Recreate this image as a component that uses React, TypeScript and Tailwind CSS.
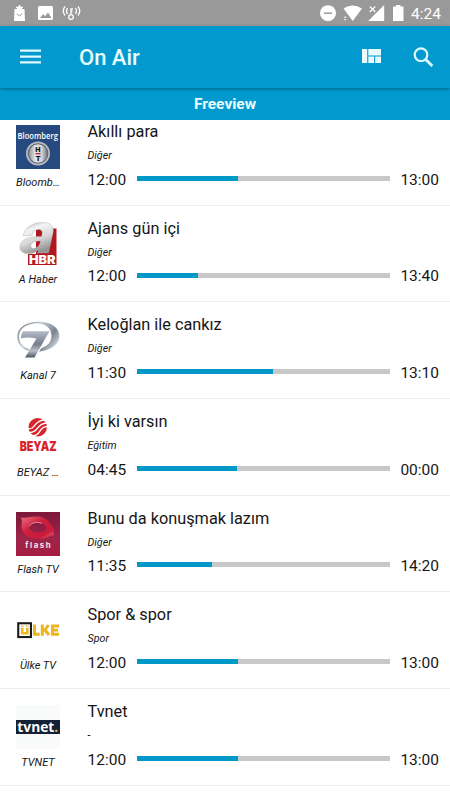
import React from 'react';

type Program = {
  channel: string;
  title: string;
  category: string;
  start: string;
  end: string;
  progress: number;
  logo: React.ReactNode;
};

function BloombergLogo() {
  return (
    <svg viewBox="0 0 44 44" className="size-11 overflow-visible">
      <defs>
        <linearGradient id="ht-ring" x1="0" y1="0" x2="1" y2="0">
          <stop offset="0" stopColor="#8b8d93" />
          <stop offset="0.35" stopColor="#e6e6e8" />
          <stop offset="0.7" stopColor="#d2d3d6" />
          <stop offset="1" stopColor="#77797f" />
        </linearGradient>
      </defs>
      <rect width="44" height="44" fill="#264a80" />
      <circle cx="22" cy="28.5" r="12" fill="#b9bcc3" />
      <circle cx="22" cy="28.5" r="10.3" fill="#5c6069" />
      <circle cx="22" cy="28.5" r="9.3" fill="url(#ht-ring)" />
      <rect x="19.5" y="28" width="5" height="1.3" fill="#c0203a" />
      <text x="22" y="27.2" textAnchor="middle" fontSize="7.5" fontWeight="900" fill="#111" fontFamily="Roboto, sans-serif">H</text>
      <text x="22" y="35.8" textAnchor="middle" fontSize="7.5" fontWeight="900" fill="#111" fontFamily="Roboto, sans-serif">T</text>
      <text x="1.5" y="14.1" textLength="40.5" lengthAdjust="spacingAndGlyphs" fontSize="8.2" fontWeight="600" fill="#fff" fontFamily="'Open Sans', sans-serif">Bloomberg</text>
    </svg>
  );
}

function HaberLogo() {
  return (
    <svg viewBox="0 0 44 44" className="size-11 overflow-visible">
      <defs>
        <linearGradient id="haber-a" x1="0" y1="0" x2="0.4" y2="1">
          <stop offset="0" stopColor="#a2a2a2" />
          <stop offset="0.3" stopColor="#f4f4f4" />
          <stop offset="0.65" stopColor="#d6d6d6" />
          <stop offset="1" stopColor="#959595" />
        </linearGradient>
      </defs>
      <path d="M12 32H20V6.5H40.5V43H12Z" fill="#b0181e" />
      <path
        fill="url(#haber-a)"
        stroke="#aaa"
        strokeWidth="0.4"
        fillRule="evenodd"
        d="M7 14C9 5 17 0.5 26 0.5C35 0.5 38.5 4 37 11L32.5 31H21.5L22.5 27.5C19 31 15 32 11 31.5C5 31 2.5 27 4.5 22C7 16 15 14.5 25.5 14.5C27 10 26 7.5 22.5 7.5C19 7.5 17 9.5 16 13.5ZM24.5 19C18.5 19 15.5 20.5 15 23.5C14.5 26 17 27 19.5 26C22.5 25 24 22.5 24.5 19Z"
      />
      <text x="13" y="41.7" textLength="26.5" lengthAdjust="spacingAndGlyphs" fontSize="11.8" fontWeight="900" fill="#fff" fontFamily="Inter, sans-serif">HBR</text>
    </svg>
  );
}

function Kanal7Logo() {
  return (
    <svg viewBox="0 0 44 44" className="size-11 overflow-visible">
      <defs>
        <linearGradient id="kanal-ring" x1="0" y1="0" x2="1" y2="0.6">
          <stop offset="0" stopColor="#65717c" />
          <stop offset="0.45" stopColor="#c5cbd1" />
          <stop offset="0.8" stopColor="#7b858f" />
          <stop offset="1" stopColor="#c0c7cd" />
        </linearGradient>
        <linearGradient id="kanal-seven" x1="0" y1="0" x2="0" y2="1">
          <stop offset="0" stopColor="#b4bac6" />
          <stop offset="0.5" stopColor="#747e91" />
          <stop offset="0.75" stopColor="#b9bec8" />
          <stop offset="1" stopColor="#4d5665" />
        </linearGradient>
      </defs>
      <path
        fill="url(#kanal-ring)"
        fillRule="evenodd"
        d="M21 3.7C34 3 43.3 9 43.3 18C43.3 27 33 33.7 20 33.7C9 33.7 1.3 28 1.3 19C1.3 10 9 4.5 21 3.7ZM20 5.2C9 6.2 2.8 11 3 19C3.2 27 10 32 19 31.5C28 31 35.5 26 35.5 18C35.5 10 29 5 20 5.2Z"
      />
      <path fill="#fff" d="M6.5 12.5H34.5L19.5 40.5H8L18 23H4Z" />
      <path fill="url(#kanal-seven)" d="M7 13.2H33.5L18.5 39.4H9L20.5 20.5Q11 18.5 4.7 20.5Q5 16 7 13.2Z" />
    </svg>
  );
}

function BeyazLogo() {
  return (
    <svg viewBox="0 0 44 44" className="size-11 overflow-visible">
      <circle cx="21.7" cy="12.3" r="9.2" fill="#d8242b" />
      <g fill="none" stroke="#fff" strokeWidth="1.4">
        <path d="M12 13.5C20 15 17 6 28 5" />
        <path d="M13.5 17.5C23 18 20 8.5 30.5 8" />
        <path d="M17 21C26 20 22 11.5 32 11.5" />
      </g>
      <text x="3.7" y="36.2" textLength="37" lengthAdjust="spacingAndGlyphs" fontSize="13.6" fontWeight="900" fill="#d8242b" fontFamily="Inter, sans-serif">BEYAZ</text>
    </svg>
  );
}

function FlashLogo() {
  return (
    <svg viewBox="0 0 44 44" className="size-11 overflow-visible">
      <defs>
        <linearGradient id="flash-bg" x1="0" y1="0" x2="0" y2="1">
          <stop offset="0" stopColor="#7c1839" />
          <stop offset="0.6" stopColor="#9f2449" />
          <stop offset="1" stopColor="#a51c40" />
        </linearGradient>
        <linearGradient id="flash-eye" x1="0" y1="0" x2="1" y2="1">
          <stop offset="0" stopColor="#e87483" />
          <stop offset="0.4" stopColor="#d0203f" />
          <stop offset="0.75" stopColor="#c91a3c" />
          <stop offset="1" stopColor="#f3667b" />
        </linearGradient>
      </defs>
      <rect width="44" height="44" fill="url(#flash-bg)" />
      <path
        fill="url(#flash-eye)"
        fillRule="evenodd"
        d="M4.5 5.5C12 6.5 18 3.5 25 5C31 6.5 34 11 37 15.5C38 17 37.5 20 38 23.5C35 22 31 27 22 27C13 27 7 23 5.500 16C5 11 7.5 9 4.5 5.5ZM21 10.5C16 10.5 13 13 13.5 16.500C14.5 20 19 21 24.5 20.500C29 20 31 17.5 30 14.5C28.5 11.5 25 10.5 21 10.5Z"
      />
      <path d="M13.500 14C15.5 10.5 21 9.5 26 11.300" fill="none" stroke="#f4a5b0" strokeWidth="0.8" />
      <text x="9.3" y="35.5" textLength="25.2" fontSize="7.8" fontWeight="700" fill="#f7e6ea" fontFamily="Inter, sans-serif">flash</text>
    </svg>
  );
}

function UlkeLogo() {
  return (
    <svg viewBox="0 0 44 44" className="size-11 overflow-visible">
      <rect x="2.25" y="15.25" width="12.7" height="13.8" fill="#fff" stroke="#1b1b1b" strokeWidth="2.1" />
      <g fill="none" stroke="#edb51e" strokeWidth="3">
        <path d="M6.2 20V25.3H11.3V20" strokeWidth="2.6" />
        <path d="M5 18.2H7.5M10 18.2H12.5" strokeWidth="1.3" />
        <path d="M18.5 16.5V26.2H23.7" />
        <path d="M26.3 16.5V27.7M26.5 22H29L32.5 17M29 22L33 27" />
        <path d="M43 18H36.5V26.2H43M36 22.1H42" strokeWidth="2.9" />
      </g>
    </svg>
  );
}

function TvnetLogo() {
  return (
    <svg viewBox="0 0 44 44" className="size-11 overflow-visible">
      <rect width="44" height="44" fill="#f9fbfa" />
      <rect y="15" width="44" height="14" fill="#142235" />
      <text x="1.3" y="26.7" textLength="41" lengthAdjust="spacingAndGlyphs" fontSize="14" fontWeight="700" fill="#fff" fontFamily="'Open Sans', sans-serif">
        tvnet<tspan fill="#d6b34a">.</tspan>
      </text>
    </svg>
  );
}

const programs: Program[] = [
  { channel: 'Bloomb…', title: 'Akıllı para', category: 'Diğer', start: '12:00', end: '13:00', progress: 40, logo: <BloombergLogo /> },
  { channel: 'A Haber', title: 'Ajans gün içi', category: 'Diğer', start: '12:00', end: '13:40', progress: 24, logo: <HaberLogo /> },
  { channel: 'Kanal 7', title: 'Keloğlan ile cankız', category: 'Diğer', start: '11:30', end: '13:10', progress: 54, logo: <Kanal7Logo /> },
  { channel: 'BEYAZ …', title: 'İyi ki varsın', category: 'Eğitim', start: '04:45', end: '00:00', progress: 39.8, logo: <BeyazLogo /> },
  { channel: 'Flash TV', title: 'Bunu da konuşmak lazım', category: 'Diğer', start: '11:35', end: '14:20', progress: 29.7, logo: <FlashLogo /> },
  { channel: 'Ülke TV', title: 'Spor & spor', category: 'Spor', start: '12:00', end: '13:00', progress: 40, logo: <UlkeLogo /> },
  { channel: 'TVNET', title: 'Tvnet', category: '-', start: '12:00', end: '13:00', progress: 40, logo: <TvnetLogo /> },
];

function StatusBar() {
  return (
    <div className="flex h-[26px] shrink-0 items-center bg-[#999999] text-white">
      <svg width="90" height="26" viewBox="0 0 90 26" fill="currentColor">
        {/* shopping bag */}
        <path d="M14.5 9H17V8H16V6.8H18.3Q18.3 5 19.5 5T20.7 6.8H23V8H22V9H24.5L25 21H14Z" />
        <path d="M17 13.5Q19.5 18 22 13.5" fill="none" stroke="#999999" strokeWidth="1" />
        {/* image */}
        <rect x="38" y="6" width="15" height="14" rx="1.5" />
        <path d="M40 18L43.2 14L45.2 16.2L48 12.5L51.5 18Z" fill="#999999" />
        {/* tethering */}
        <g fill="none" stroke="currentColor" strokeWidth="1.3">
          <circle cx="71" cy="17" r="2.3" />
          <path d="M71 14.5V9H73M71 11.5H72.500" />
          <path d="M67.5 8Q65.5 11 67.5 14M65 6.5Q61.5 11 65 15.5" />
          <path d="M75.5 8Q77.5 11 75.5 14M78 6.5Q81.5 11 78 15.5" />
        </g>
      </svg>
      <svg className="ml-auto" width="92" height="26" viewBox="0 0 92 26" fill="currentColor">
        {/* do not disturb */}
        <circle cx="8" cy="13.2" r="8" />
        <rect x="4" y="12.5" width="8" height="1.5" fill="#999999" />
        {/* wifi */}
        <path d="M23.5 8.5Q32.5 2.5 42 8.5L32.8 21Z" />
        <path d="M23.8 17.7L25.2 16L26.6 17.7ZM23.8 18.9L25.2 20.6L26.6 18.9Z" />
        {/* cellular */}
        <path d="M64.2 5V21H48.2Z" />
        <path d="M49.5 6.5L55.5 12.5M55.5 6.5L49.5 12.5" stroke="#999999" strokeWidth="3" />
        <path d="M49.8 6.5L55.3 12M55.3 6.5L49.8 12" stroke="currentColor" strokeWidth="1.2" />
        {/* battery */}
        <path d="M76 5H80.5V6.5H83.5V21H73V6.5H76Z" />
      </svg>
      <span className="mr-[9px] -ml-px pt-[3px] text-[15.5px] leading-none">4:24</span>
    </div>
  );
}

function Toolbar() {
  return (
    <header className="relative z-10 flex h-[62px] shrink-0 items-center bg-[#0299ce] text-white shadow-[0_1px_3px_rgba(0,0,0,0.35)]">
      <svg className="ml-5" width="21" height="16" viewBox="0 0 21 16" fill="#dcfaff">
        <path d="M0 0.5H21V2.8H0ZM0 6.4H21V8.7H0ZM0 12.3H21V14.6H0Z" />
      </svg>
      <h1 className="ml-[38px] pt-0.5 text-[22px] font-medium leading-none text-[#e8fcff]">On Air</h1>
      <svg className="mb-0.5 ml-auto" width="20" height="14" viewBox="0 0 20 14" fill="#e8fcff">
        <path d="M0 0H5.2V14H0ZM6.3 0H19V6.4H6.3ZM6.3 7.5H12.1V14H6.3ZM13.2 7.5H19V14H13.2Z" />
      </svg>
      <svg className="mr-4 ml-[31px]" width="21" height="21" viewBox="0 0 21 21" fill="none" stroke="#dcfaff">
        <circle cx="8" cy="7.7" r="6.3" strokeWidth="2.2" />
        <path d="M12.5 12.2L19.3 19" strokeWidth="2.8" />
      </svg>
    </header>
  );
}

function ProgramRow({ program }: { program: Program }) {
  return (
    <li className="flex h-[96.67px] border-b-[1.5px] border-[#eeeeee]">
      <div className="flex w-[76px] shrink-0 flex-col items-center pt-4">
        {program.logo}
        <span className="mt-[7px] whitespace-nowrap text-[11px] italic leading-[13px]">{program.channel}</span>
      </div>
      <div className="min-w-0 flex-1 pt-3 pr-[11px] pl-[11.5px]">
        <h2 className="text-[16.3px] leading-[22px]">{program.title}</h2>
        <p className="mt-[6px] text-[10.7px] italic leading-[13px]">{program.category}</p>
        <div className="mt-[6.5px] flex items-center text-[15.5px] leading-[22px]">
          <span className="w-[49.5px] shrink-0">{program.start}</span>
          <div className="mb-[2.5px] h-[5px] flex-1 bg-[#c8c8c8]">
            <div className="h-full bg-[#0299c8]" style={{ width: `${program.progress}%` }} />
          </div>
          <span className="w-[49.5px] shrink-0 text-right">{program.end}</span>
        </div>
      </div>
    </li>
  );
}

export default function App() {
  return (
    <div className="flex h-[800px] w-[450px] flex-col overflow-hidden bg-white font-['Roboto',sans-serif] text-[#161616]">
      <StatusBar />
      <Toolbar />
      <div className="flex h-[31.5px] shrink-0 items-center justify-center bg-[#0299ce] pt-px text-[15.5px] font-bold text-[#e8fcff]">
        Freeview
      </div>
      <main className="min-h-0 flex-1 overflow-hidden">
        {/* list is scrolled slightly under the group header */}
        <ul className="-mt-[10.4px]">
          {programs.map((program) => (
            <ProgramRow key={program.channel} program={program} />
          ))}
        </ul>
      </main>
    </div>
  );
}
